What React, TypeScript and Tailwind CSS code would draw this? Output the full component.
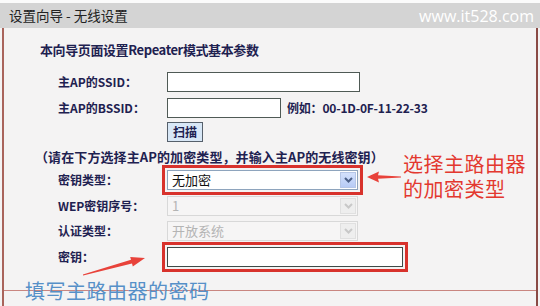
import React from 'react';

const FONT = { fontFamily: '"Noto Sans CJK SC", "Liberation Sans", sans-serif' };

const Label: React.FC<{ text: string }> = ({ text }) => (
  <div className="w-[109px] shrink-0 text-[12px] font-bold text-[#1e2150] leading-[20px]">{text}</div>
);

const Chevron: React.FC<{ color: string }> = ({ color }) => (
  <svg width="9" height="6" viewBox="0 0 9 6">
    <path d="M1 1 L4.5 4.5 L8 1" fill="none" stroke={color} strokeWidth="2" />
  </svg>
);

const Select: React.FC<{ value: string; disabled?: boolean }> = ({ value, disabled }) => (
  <div
    className={
      disabled
        ? 'w-[191px] h-[20px] flex items-center justify-between border border-[#d8d8d8] bg-[#f6f5f5] pl-[4px] pr-[1px]'
        : 'w-[191px] h-[20px] flex items-center justify-between border border-[#8ea4bd] bg-white pl-[4px] pr-[1px]'
    }
  >
    <span className={disabled ? 'text-[13px] text-[#b4b4b4]' : 'text-[13px] text-[#111]'}>{value}</span>
    <div
      className={
        disabled
          ? 'w-[16px] h-[16px] flex items-center justify-center bg-[#eeeeee] border border-[#e0e0e0]'
          : 'w-[16px] h-[16px] flex items-center justify-center bg-gradient-to-b from-[#d4e1fc] to-[#b7cbf5] border border-[#b6c6e6]'
      }
    >
      <Chevron color={disabled ? '#c8c8c8' : '#4c6088'} />
    </div>
  </div>
);

export default function App() {
  return (
    <div className="relative w-[540px] h-[306px] overflow-hidden bg-[#f4f3f3]" style={FONT}>
      <div className="h-[3px] bg-[#fbfbfb]" />
      <div className="h-[25px] bg-[#d4d4d4] flex items-center justify-between pl-[9px] pr-[6px]">
        <span className="text-[13.5px] text-[#222]">设置向导 - 无线设置</span>
        <span className="text-[16px] text-white" style={{ fontFamily: '"Open Sans", "Liberation Sans", sans-serif' }}>
          www.it528.com
        </span>
      </div>

      <div className="ml-[2px] w-[536px] h-[278px] border-l-2 border-r-2 border-l-[#a9645b] border-r-[#8a4a45]">
        <div className="h-[263px] border-b border-[#c98680] flex flex-col">
          <div className="mt-[14px] pl-[36px] h-[16px] leading-[16px] text-[13px] font-bold text-[#1e2150] tracking-[-0.4px]">
            本向导页面设置Repeater模式基本参数
          </div>

          <div className="mt-[14px] pl-[54px] flex items-center h-[20px]">
            <Label text="主AP的SSID：" />
            <div className="w-[193px] h-[20px] bg-white border border-[#4f5a55]" />
          </div>

          <div className="mt-[6px] pl-[54px] flex items-center h-[20px]">
            <Label text="主AP的BSSID：" />
            <div className="w-[114px] h-[20px] bg-white border border-[#4f5a55]" />
            <span className="ml-[6px] text-[12px] font-bold text-[#1e2150] tracking-[-0.2px]">例如：00-1D-0F-11-22-33</span>
          </div>

          <div className="mt-[4px] pl-[163px] flex items-center h-[20px]">
            <div className="w-[36px] h-[20px] flex items-center justify-center bg-[#d8e7f6] border border-[#56606b] text-[12px] font-bold text-[#1e2150]">
              扫描
            </div>
          </div>

          <div className="mt-[7px] pl-[31px] h-[16px] leading-[16px] text-[13px] font-bold text-[#1e2150] tracking-[0.1px]">
            （请在下方选择主AP的加密类型，并输入主AP的无线密钥）
          </div>

          <div className="mt-[5px] pl-[54px] flex items-center h-[20px]">
            <Label text="密钥类型：" />
            <div className="outline-3 outline-offset-[2px] outline-[#d8322c]">
              <Select value="无加密" />
            </div>
          </div>

          <div className="mt-[6px] pl-[54px] flex items-center h-[20px]">
            <Label text="WEP密钥序号：" />
            <Select value="1" disabled />
          </div>

          <div className="mt-[5px] pl-[54px] flex items-center h-[20px]">
            <Label text="认证类型：" />
            <Select value="开放系统" disabled />
          </div>

          <div className="mt-[6px] pl-[54px] flex items-center h-[20px]">
            <Label text="密钥：" />
            <div className="outline-3 outline-offset-[2px] outline-[#d8322c]">
              <div className="w-[236px] h-[20px] bg-white border border-[#3f4a48]" />
            </div>
          </div>
        </div>
      </div>

      {/* annotations drawn over the screenshot */}
      <div className="absolute left-[403px] top-[151px] text-[20px] leading-[25px] text-[#e3382f] tracking-[0.5px]">
        选择主路由器
        <br />
        的加密类型
      </div>
      <svg className="absolute left-[366px] top-[170px]" width="36" height="14" viewBox="0 0 36 14">
        <polygon points="1,7 13,1.5 12,5.2 35,6.5 35,7.5 12,8.8 13,12.5" fill="#e8423a" />
      </svg>

      <div className="absolute left-[25px] top-[279px] text-[20px] leading-[24px] text-[#5690c8] tracking-[0.5px]">
        填写主路由器的密码
      </div>
      <svg className="absolute left-[80px] top-[252px]" width="68" height="28" viewBox="0 0 68 28">
        <polygon points="65,6 52.8,14.5 52,11.6 3.1,23.5 2.9,22.5 51,7.8 50.2,4.9" fill="#e8423a" />
      </svg>
    </div>
  );
}
